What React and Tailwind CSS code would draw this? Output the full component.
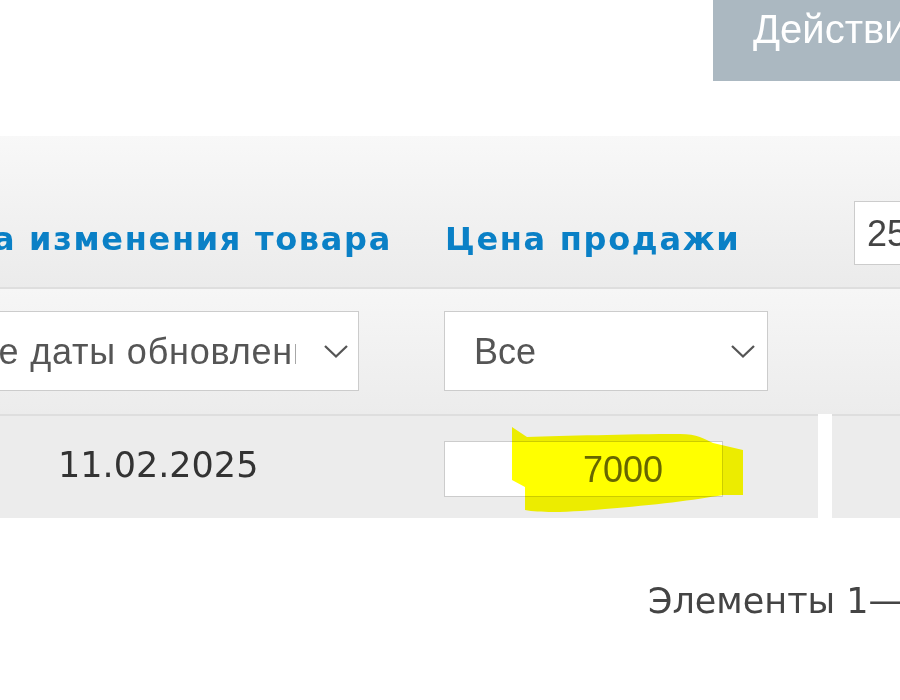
const Chevron = () => (
  <svg width="26" height="15" viewBox="0 0 26 15" fill="none" className="shrink-0">
    <polyline points="2,2 13,12.5 24,2" stroke="#555555" strokeWidth="2.3" fill="none" />
  </svg>
);

export default function App() {
  return (
    <div className="relative w-[900px] h-[700px] overflow-hidden bg-white">
      <div className="flex h-[81px]">
        <div className="ml-[713px] w-[260px] shrink-0 h-[81px] bg-[#abb8c1] pl-[40px] pt-[6px] text-[40px] leading-[46px] text-white font-['Liberation_Sans',sans-serif] whitespace-nowrap">
          Действия
        </div>
      </div>

      <div className="mt-[55px] w-[1100px]">
        {/* header row */}
        <div className="flex h-[153px] bg-linear-to-b from-[#f8f8f8] to-[#ebebeb] border-b-2 border-[#dedede]">
          <div className="w-[420px] shrink-0 flex justify-end pr-[28px] pt-[84px]">
            <span className="font-['DejaVu_Sans',sans-serif] font-bold text-[32px] leading-[38px] tracking-[1.7px] text-[#0a80c6] whitespace-nowrap">
              Дата изменения товара
            </span>
          </div>
          <div className="w-[412px] shrink-0 pl-[25px] pt-[84px]">
            <span className="font-['DejaVu_Sans',sans-serif] font-bold text-[32px] leading-[38px] tracking-[1.7px] text-[#0a80c6] whitespace-nowrap">
              Цена продажи
            </span>
          </div>
          <div className="pl-[22px] pt-[65px]">
            <div className="w-[130px] h-[64px] border border-[#cccccc] bg-white flex items-center pl-[12px] font-['Liberation_Sans',sans-serif] text-[36px] leading-[41px] text-[#444444]">
              25
            </div>
          </div>
        </div>

        {/* filter row */}
        <div className="flex h-[125px] bg-linear-to-b from-[#f6f6f6] to-[#ececec]">
          <div className="w-[420px] shrink-0 flex justify-end pr-[61px] pt-[22px]">
            <div className="w-[434px] shrink-0 h-[80px] border border-[#cccccc] bg-white flex items-center">
              <div className="w-[370px] shrink-0 pl-[29px] overflow-hidden whitespace-nowrap font-['Liberation_Sans',sans-serif] text-[36px] leading-[41px] tracking-[0.8px] text-[#555555]">
                Все даты обновления
              </div>
              <div className="ml-[27px]">
                <Chevron />
              </div>
            </div>
          </div>
          <div className="w-[412px] shrink-0 pl-[24px] pt-[22px]">
            <div className="w-[324px] h-[80px] border border-[#cccccc] bg-white flex items-center justify-between pr-[11px]">
              <span className="pl-[29px] font-['Liberation_Sans',sans-serif] text-[36px] leading-[41px] text-[#555555]">
                Все
              </span>
              <Chevron />
            </div>
          </div>
          <div className="flex-1" />
        </div>

        {/* data row */}
        <div className="flex h-[104px] bg-white">
          <div className="w-[420px] shrink-0 bg-[#ececec] border-t-2 border-[#dedede] pl-[58px] pt-[29px]">
            <span className="font-['DejaVu_Sans',sans-serif] text-[35px] leading-[41px] text-[#333333]">
              11.02.2025
            </span>
          </div>
          <div className="w-[398px] shrink-0 bg-[#ececec] border-t-2 border-[#dedede] pl-[24px] pt-[25px]">
            <div className="w-[279px] h-[56px] border border-[#cccccc] bg-white flex items-center justify-end pr-[59px] font-['Liberation_Sans',sans-serif] text-[36px] leading-[41px] text-[#666666]">
              7000
            </div>
          </div>
          <div className="w-[14px] shrink-0 bg-white" />
          <div className="flex-1 bg-[#ececec] border-t-2 border-[#dedede]" />
        </div>

        <div className="mt-[63px] pl-[648px] whitespace-nowrap font-['DejaVu_Sans',sans-serif] text-[35px] leading-[41px] text-[#444444]">
          Элементы 1—1 из 1
        </div>
      </div>

      <svg
        className="absolute left-[505px] top-[420px] pointer-events-none mix-blend-multiply"
        width="245"
        height="100"
        viewBox="0 0 245 100"
      >
        <path
          d="M7,7 L22,17 C60,16 120,14 175,14 C192,14 200,19 208,23 L238,30 L238,75 L218,75 C190,80 150,85 100,89 C80,91 40,94 20,90 L20,67 L7,60 Z"
          fill="#ffff00"
        />
      </svg>
    </div>
  );
}
